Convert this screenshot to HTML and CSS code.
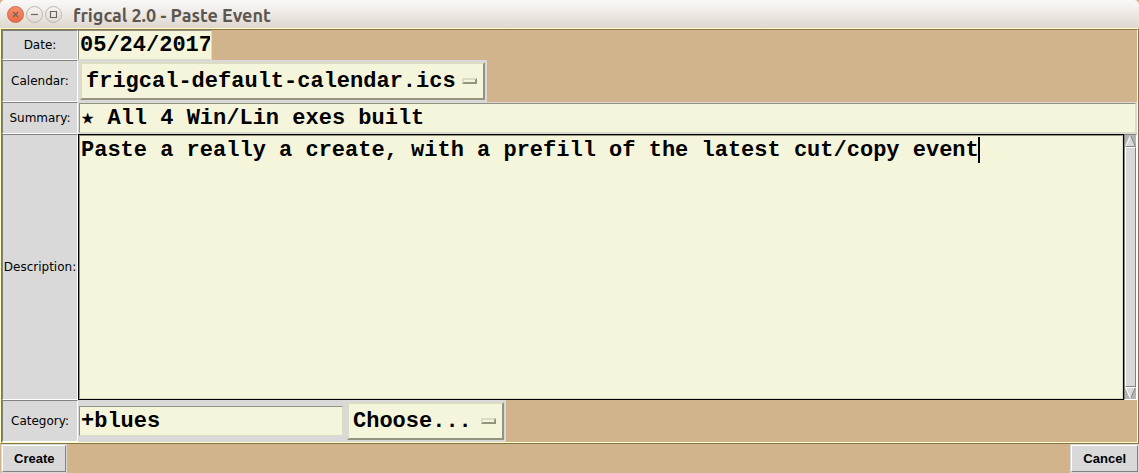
FILE: index.html
```html
<!DOCTYPE html>
<html lang="en">
<head>
<meta charset="utf-8">
<title>frigcal 2.0 - Paste Event</title>
<link rel="stylesheet" href="styles.css">
</head>
<body>
<div class="window">
  <header class="titlebar">
    <button class="control control-close" type="button" aria-label="Close"><svg viewBox="0 0 15 15"><path d="M5 5l5 5M10 5l-5 5"/></svg></button>
    <button class="control" type="button" aria-label="Minimize"><svg viewBox="0 0 15 15"><path d="M4 7.500h7"/></svg></button>
    <button class="control" type="button" aria-label="Maximize"><svg viewBox="0 0 15 15"><path d="M4.500 4.500h6v6h-6z"/></svg></button>
    <h1 class="title">frigcal 2.0 - Paste Event</h1>
  </header>
  <form class="dialog">
    <div class="frame">
      <div class="fields">
        <label class="label" for="date">Date:</label>
        <div class="cell"><input class="entry entry-date" id="date" type="text" value="05/24/2017"></div>

        <label class="label" for="calendar">Calendar:</label>
        <div class="cell"><div class="group"><span class="menu"><select class="select" id="calendar"><option>frigcal-default-calendar.ics</option></select></span></div></div>

        <label class="label" for="summary">Summary:</label>
        <div class="cell cell-summary"><input class="entry entry-summary" id="summary" type="text" value="★ All 4 Win/Lin exes built"></div>

        <label class="label" for="description">Description:</label>
        <div class="cell">
          <div class="editor"><textarea class="text" id="description">Paste a really a create, with a prefill of the latest cut/copy event</textarea><span class="caret"></span></div>
          <div class="scrollbar">
            <svg class="arrow" viewBox="0 0 11 12"><path class="face" d="M5.500 0L11 12H0z"/><path class="lit" d="M5.500 .5L.5 11.500"/><path class="shade" d="M5.500 .5L10.500 11.500H.5"/></svg>
            <div class="thumb"></div>
            <svg class="arrow" viewBox="0 0 11 12"><path class="face" d="M0 0h11L5.500 12z"/><path class="shade" d="M10.500 .5L5.500 11.500"/><path class="lit" d="M10.500 .5H.5L5.500 11.500"/></svg>
          </div>
        </div>

        <label class="label" for="category">Category:</label>
        <div class="cell"><div class="group group-category"><input class="entry entry-category" id="category" type="text" value="+blues"><span class="menu menu-choose"><select class="select" aria-label="Choose category"><option>Choose...</option></select></span></div></div>
      </div>
    </div>
    <footer class="actions">
      <button class="button" type="button">Create</button>
      <button class="button" type="button">Cancel</button>
    </footer>
  </form>
</div>
</body>
</html>
```
FILE: styles.css
```css
*,
*::after { box-sizing: border-box; }

body {
  margin: 0;
  background: #d2b48c;
  font-family: "DejaVu Sans", sans-serif;
}

.window {
  display: flex;
  flex-direction: column;
  min-height: 100vh;
}

.titlebar {
  display: flex;
  align-items: center;
  gap: 2px;
  height: 28px;
  padding: 1px 7px 0;
  border-radius: 5px 5px 0 0;
  background: linear-gradient(#f9f8f7, #f0ece9 40%, #dfd7cf);
}

.control {
  width: 17px;
  height: 17px;
  padding: 0;
  border: 1px solid #bdb6af;
  border-radius: 50%;
  background: linear-gradient(#f6f4f2, #dfdad5);
}

.control-close {
  border-color: #c9694c;
  background: linear-gradient(#f58e6c, #ea6b43);
}

.control svg {
  display: block;
  width: 15px;
  height: 15px;
  fill: none;
  stroke: #6d665e;
  stroke-width: 1.2;
}

.title {
  margin: 0 0 0 9px;
  color: #5c564f;
  font: bold 18px/26px Ubuntu, "Noto Sans", sans-serif;
}

.dialog {
  display: flex;
  flex: 1;
  flex-direction: column;
}

.frame {
  display: flex;
  flex: 1;
  border: 1px solid;
  border-color: #ffffc4 #877449 #877449 #ffffc4;
}

.fields {
  display: grid;
  flex: 1;
  grid-template-columns: 76px 1fr;
  grid-template-rows: 30px 42px 32px 1fr 42px;
  border: 1px solid;
  border-color: #877449 #ffffc4 #ffffc4 #877449;
}

.label {
  display: flex;
  align-items: center;
  justify-content: center;
  border: 1px solid;
  border-color: #828282 #fff #fff #828282;
  background: #d9d9d9;
  color: #000;
  font-size: 12px;
}

.cell {
  display: flex;
  min-width: 0;
}

.cell-summary {
  padding: 1px;
  background: #d9d9d9;
}

.entry,
.select,
.editor,
.text {
  color: #000;
  font: bold 22px/28px "Courier 10 Pitch", "Liberation Mono", monospace;
}

.entry {
  min-width: 0;
  margin: 0;
  padding: 2px 1px 0;
  border: 1px solid;
  border-color: #93937f #dcdcc4 #dcdcc4 #93937f;
  border-radius: 0;
  outline: 0;
  background: #f5f5dc;
}

.entry-date { width: 134px; }
.entry-summary { flex: 1; }

.entry-category {
  width: 264px;
  height: 30px;
  padding-top: 0;
}

.group {
  display: flex;
  align-items: center;
  padding: 2px;
  background: #d9d9d9;
}

.group-category {
  gap: 4px;
  padding: 2px 2px 2px 1px;
}

.menu {
  display: flex;
  position: relative;
  width: 405px;
  height: 38px;
}

.menu-choose { width: 157px; }

.menu::after {
  position: absolute;
  top: 16px;
  right: 8px;
  width: 15px;
  height: 6px;
  border: 2px solid;
  border-color: #dcdcc4 #93937f #93937f #dcdcc4;
  content: "";
  pointer-events: none;
}

.select {
  flex: 1;
  min-width: 0;
  padding: 2px 4px 0;
  border: 2px solid;
  border-color: #dcdcc4 #93937f #93937f #dcdcc4;
  border-radius: 0;
  appearance: none;
  background: #f5f5dc;
}

.editor {
  display: flex;
  position: relative;
  flex: 1;
  min-width: 0;
  border: 1px solid #000;
}

.text {
  flex: 1;
  min-width: 0;
  margin: 0;
  padding: 1px;
  border: 1px solid;
  border-color: #93937f #dcdcc4 #dcdcc4 #93937f;
  outline: 0;
  background: #f5f5dc;
  resize: none;
}

.caret {
  position: absolute;
  top: 2px;
  left: calc(68ch + 1px);
  width: 2px;
  height: 26px;
  background: #000;
}

.scrollbar {
  display: flex;
  flex-direction: column;
  width: 13px;
  border: 1px solid;
  border-color: #828282 #fff #fff #828282;
  background: #b3b3b3;
}

.arrow {
  display: block;
  width: 11px;
  height: 12px;
}

.face { fill: #d9d9d9; }
.lit { fill: none; stroke: #fff; }
.shade { fill: none; stroke: #828282; }

.thumb {
  flex: 1;
  border: 1px solid;
  border-color: #fff #828282 #828282 #fff;
  background: #d9d9d9;
}

.actions {
  display: flex;
  justify-content: space-between;
  height: 29px;
  padding: 1px 1px 1px 2px;
}

.button {
  padding: 0 11px;
  border: 1px solid;
  border-color: #fff #828282 #828282 #fff;
  border-radius: 0;
  box-shadow: 0 0 0 1px #d9d9d9;
  background: #d9d9d9;
  color: #000;
  font: bold 13px/16px "Liberation Sans", Arial, sans-serif;
}
```
